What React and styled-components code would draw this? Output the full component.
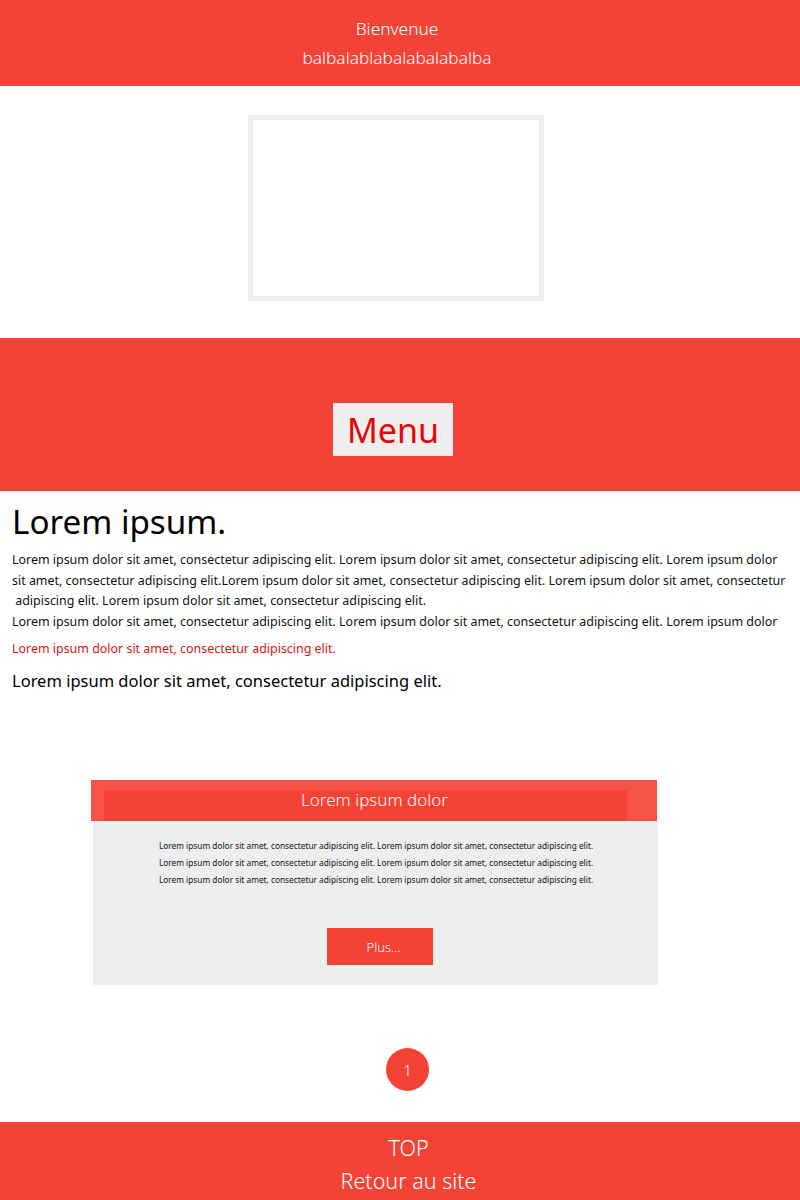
import React from 'react'
import styled, { createGlobalStyle } from 'styled-components'

const RED = '#f44336'

const GlobalStyle = createGlobalStyle`
  body {
    margin: 0;
    font-family: "Noto Sans", "Open Sans", sans-serif;
    background: #fff;
  }
`

function App() {
  return (
    <Page>
      <GlobalStyle />
      <Header>
        <HeaderLine>Bienvenue</HeaderLine>
        <HeaderLine>balbalablabalabalabalba</HeaderLine>
      </Header>

      <FrameZone>
        <Frame />
      </FrameZone>

      <MenuBand>
        <MenuButton>Menu</MenuButton>
      </MenuBand>

      <Article>
        <Title>Lorem ipsum.</Title>
        <Paragraph>
          <Line>Lorem ipsum dolor sit amet, consectetur adipiscing elit. Lorem ipsum dolor sit amet, consectetur adipiscing elit. Lorem ipsum dolor</Line>
          <Line>sit amet, consectetur adipiscing elit.Lorem ipsum dolor sit amet, consectetur adipiscing elit. Lorem ipsum dolor sit amet, consectetur</Line>
          <Line>&nbsp;adipiscing elit. Lorem ipsum dolor sit amet, consectetur adipiscing elit.</Line>
          <Line>Lorem ipsum dolor sit amet, consectetur adipiscing elit. Lorem ipsum dolor sit amet, consectetur adipiscing elit. Lorem ipsum dolor</Line>
        </Paragraph>
        <RedNote>Lorem ipsum dolor sit amet, consectetur adipiscing elit.</RedNote>
        <Lead>Lorem ipsum dolor sit amet, consectetur adipiscing elit.</Lead>
      </Article>

      <CardZone>
        <Card>
          <CardHead>
            <CardTitle>Lorem ipsum dolor</CardTitle>
          </CardHead>
          <CardBody>
            <CardText>
              <p>Lorem ipsum dolor sit amet, consectetur adipiscing elit. Lorem ipsum dolor sit amet, consectetur adipiscing elit.</p>
              <p>Lorem ipsum dolor sit amet, consectetur adipiscing elit. Lorem ipsum dolor sit amet, consectetur adipiscing elit.</p>
              <p>Lorem ipsum dolor sit amet, consectetur adipiscing elit. Lorem ipsum dolor sit amet, consectetur adipiscing elit.</p>
            </CardText>
            <MoreButton>Plus...</MoreButton>
          </CardBody>
        </Card>
      </CardZone>

      <Pager>
        <PageDot>1</PageDot>
      </Pager>

      <Footer>
        <FooterLink>TOP</FooterLink>
        <FooterLink>Retour au site</FooterLink>
      </Footer>
    </Page>
  )
}

export default App

const Page = styled.div`
  width: 800px;
  display: flex;
  flex-direction: column;
`

const Header = styled.header`
  height: 86px;
  background: ${RED};
  display: flex;
  flex-direction: column;
  align-items: center;
  padding-top: 17px;
  box-sizing: border-box;
  gap: 5px;
`

const HeaderLine = styled.div`
  color: #fff;
  font-weight: 300;
  font-size: 17.3px;
  line-height: 24px;
  margin-left: -6px;
`

const FrameZone = styled.div`
  height: 252px;
  display: flex;
  justify-content: center;
  padding-top: 29px;
  box-sizing: border-box;
`

const Frame = styled.div`
  width: 296px;
  height: 186px;
  box-sizing: border-box;
  border: 5px solid #f0f0f0;
  border-radius: 3px;
  margin-left: -8px;
`

const MenuBand = styled.nav`
  height: 153px;
  background: ${RED};
  display: flex;
  justify-content: center;
  padding-top: 65px;
  box-sizing: border-box;
`

const MenuButton = styled.div`
  width: 120px;
  height: 53px;
  background: #efefef;
  color: #ee0000;
  font-size: 34px;
  display: flex;
  align-items: center;
  justify-content: center;
  margin-left: -14px;
`

const Article = styled.section`
  padding: 8px 12px 0;
  height: 289px;
  box-sizing: border-box;
`

const Title = styled.h1`
  margin: 0;
  font-size: 33.2px;
  font-weight: 400;
  line-height: 46px;
  color: #000;
`

const Paragraph = styled.div`
  margin-top: 5px;
  font-size: 12.45px;
  line-height: 20.5px;
  color: #111;
`

const Line = styled.div`
  white-space: nowrap;
`

const RedNote = styled.div`
  margin-top: 8px;
  font-size: 12.45px;
  line-height: 17px;
  color: #dd1111;
`

const Lead = styled.div`
  margin-top: 13px;
  font-size: 16.5px;
  line-height: 22px;
  color: #000;
`

const CardZone = styled.div`
  height: 205px;
  box-sizing: border-box;
  padding: 0 0 0 91px;
`

const Card = styled.div`
  width: 566px;
`

const CardHead = styled.div`
  height: 41px;
  background: #f55347;
  padding: 10px 30px 0 13px;
  box-sizing: border-box;
  display: flex;
`

const CardTitle = styled.div`
  flex: 1;
  background: ${RED};
  color: #fff;
  font-weight: 300;
  font-size: 17px;
  line-height: 20px;
  text-align: center;
  padding-left: 18px;
`

const CardBody = styled.div`
  margin-left: 2px;
  width: 565px;
  height: 164px;
  background: #eeeeee;
  display: flex;
  flex-direction: column;
  align-items: center;
  padding-top: 16px;
  box-sizing: border-box;

  p {
    margin: 0;
  }
`

const CardText = styled.div`
  font-size: 8.3px;
  line-height: 17px;
  color: #111;
  text-align: center;
  margin-left: 1px;
`

const MoreButton = styled.div`
  margin-top: 40px;
  width: 106px;
  height: 37px;
  box-sizing: border-box;
  padding-left: 8px;
  background: ${RED};
  color: #fff;
  font-weight: 300;
  font-size: 13px;
  display: flex;
  align-items: center;
  justify-content: center;
  margin-left: 8px;
`

const Pager = styled.div`
  height: 137px;
  display: flex;
  justify-content: center;
  padding-top: 63px;
  box-sizing: border-box;
`

const PageDot = styled.div`
  width: 43px;
  height: 43px;
  border-radius: 50%;
  background: ${RED};
  color: #fff;
  font-weight: 300;
  font-size: 15px;
  display: flex;
  align-items: center;
  justify-content: center;
  margin-left: 15px;
`

const Footer = styled.footer`
  height: 78px;
  background: ${RED};
  display: flex;
  flex-direction: column;
  align-items: center;
  padding-top: 11px;
  box-sizing: border-box;
  gap: 4px;
`

const FooterLink = styled.div`
  color: #fff;
  font-weight: 300;
  font-size: 21.5px;
  line-height: 29px;
  margin-left: 17px;
`
